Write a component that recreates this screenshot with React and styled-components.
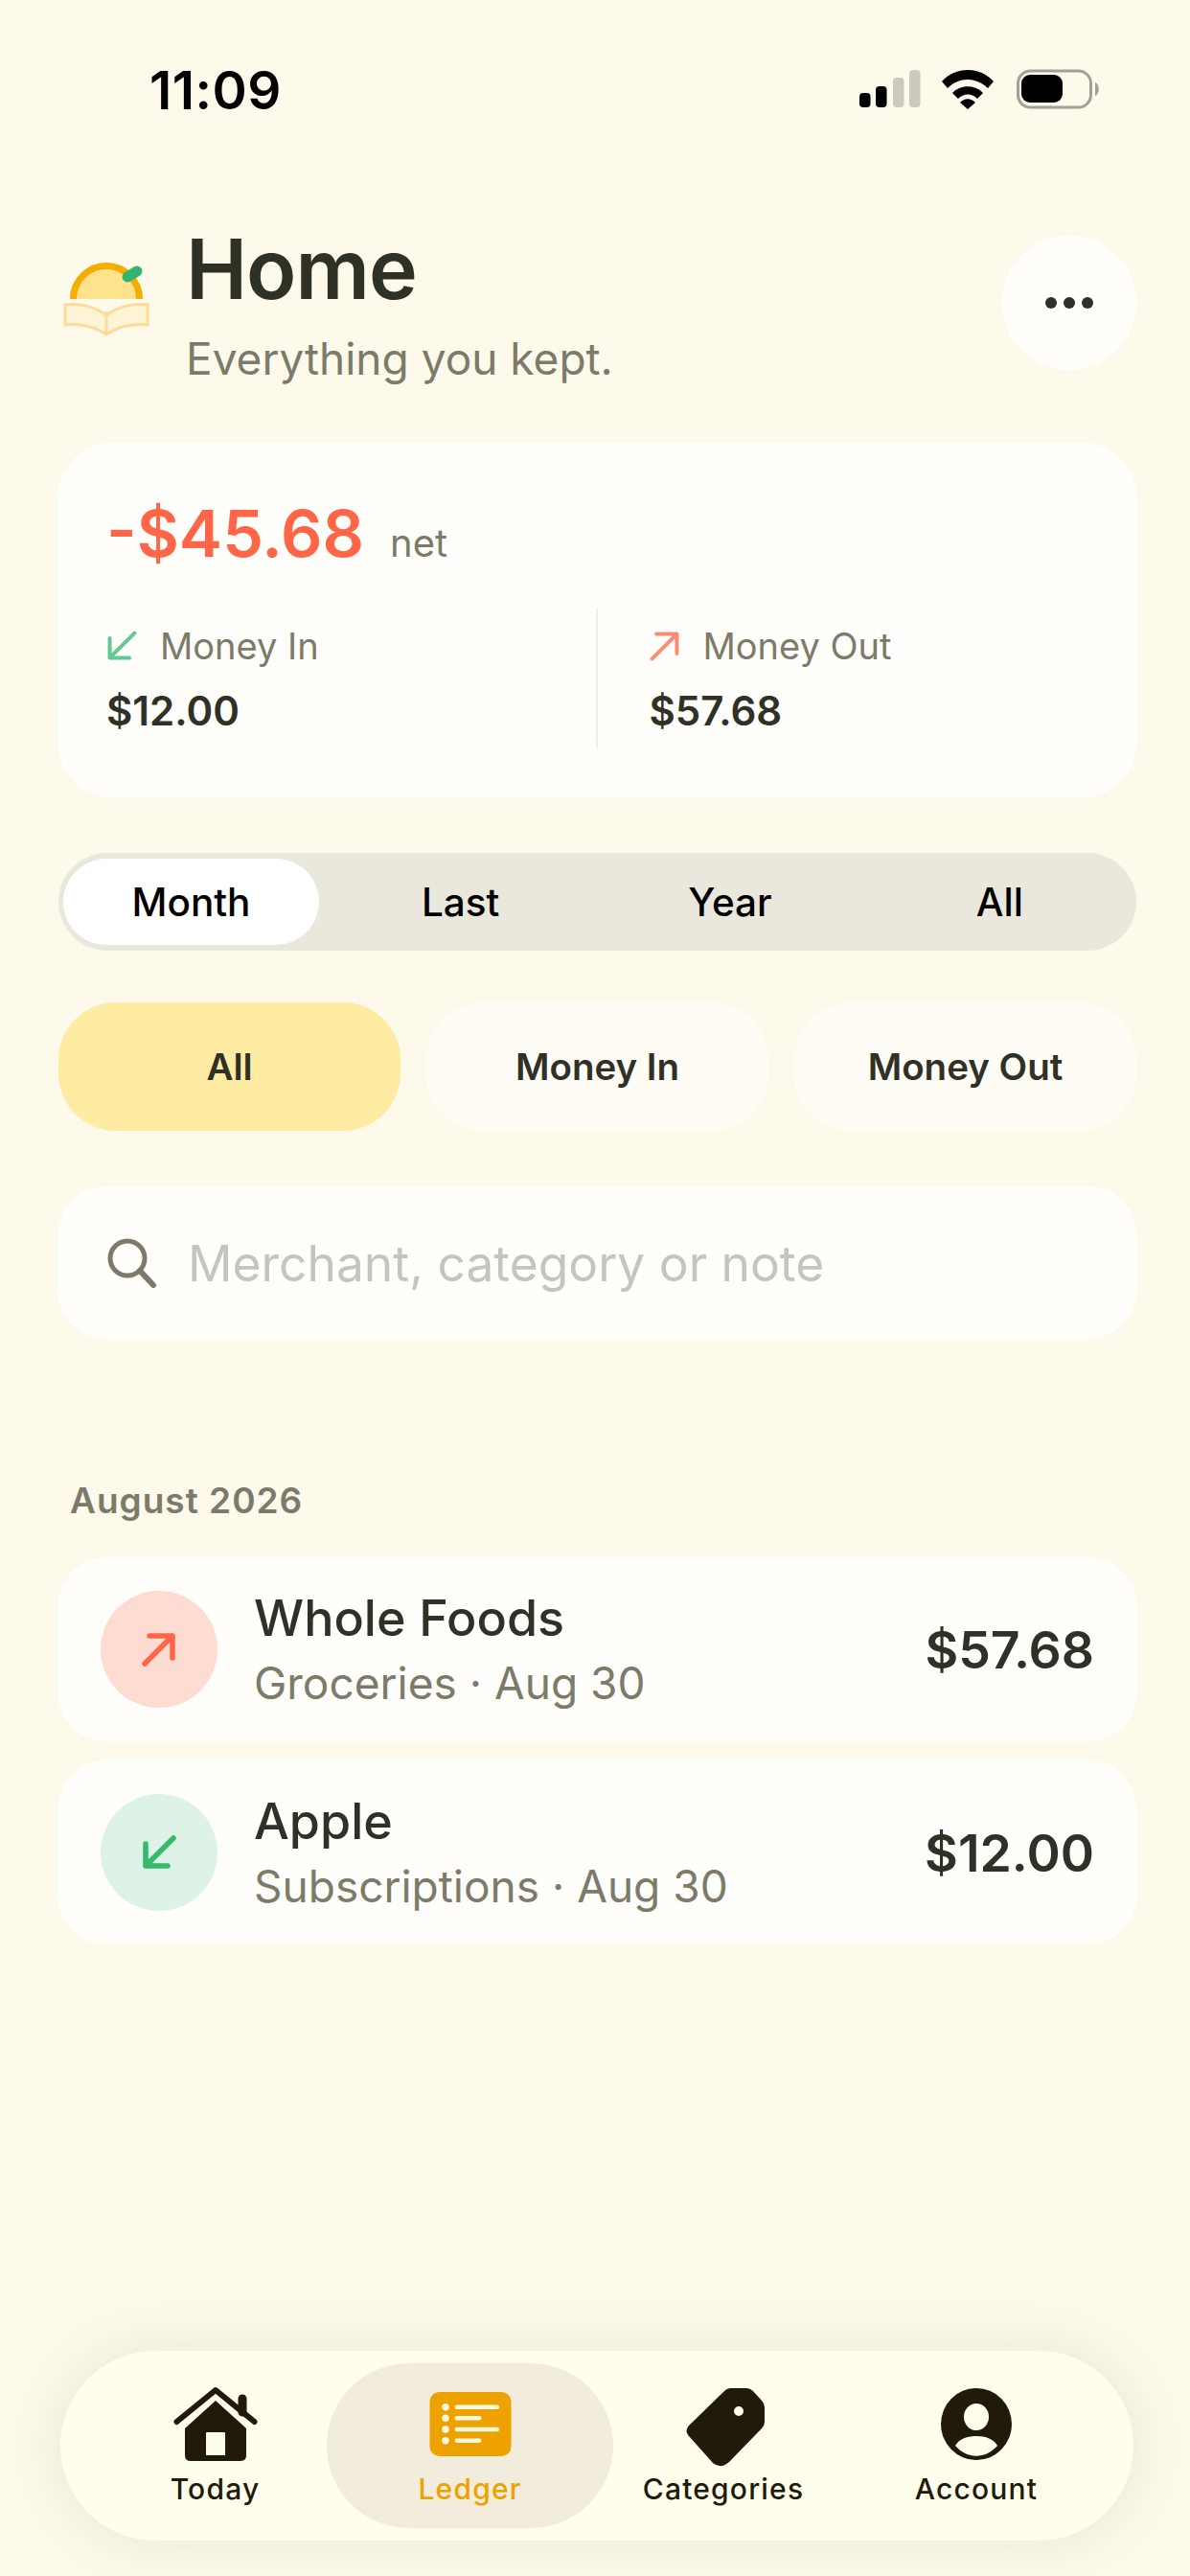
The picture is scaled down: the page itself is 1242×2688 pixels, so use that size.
import React from "react";
import styled, { createGlobalStyle } from "styled-components";

const GlobalStyle = createGlobalStyle`
  html, body {
    margin: 0;
    padding: 0;
    background: #fdf9eb;
  }
  * {
    box-sizing: border-box;
  }
`;

const Screen = styled.div`
  width: 1242px;
  height: 2688px;
  position: relative;
  overflow: hidden;
  background: #fdf9eb;
  font-family: Inter, "Liberation Sans", sans-serif;
  color: #2f3127;
`;

const StatusBar = styled.div`
  height: 186px;
  padding: 64px 93px 0 156px;
  display: flex;
  justify-content: space-between;
  align-items: flex-start;
`;

const Clock = styled.div`
  font-size: 55px;
  line-height: 60px;
  font-weight: 600;
  letter-spacing: 0.5px;
  color: #000;
`;

const StatusIcons = styled.svg`
  width: 252px;
  height: 46px;
  margin-top: 8px;
`;

const Content = styled.div`
  padding: 0 56px 0 61px;
`;

const Header = styled.div`
  display: flex;
  align-items: flex-start;
  height: 276px;
`;

const Logo = styled.svg`
  width: 92px;
  height: 84px;
  margin: 85px 37px 0 4px;
  flex: none;
`;

const TitleBlock = styled.div`
  flex: 1;
`;

const Title = styled.h1`
  margin: 45px 0 0;
  font-size: 86px;
  line-height: 100px;
  font-weight: 600;
  letter-spacing: -1px;
  color: #2f3127;
`;

const Subtitle = styled.div`
  margin-top: 17px;
  font-size: 46px;
  line-height: 52px;
  color: #7c7b69;
`;

const RoundButton = styled.div`
  width: 140px;
  height: 140px;
  margin-top: 60px;
  border-radius: 50%;
  background: #fffefa;
  display: flex;
  align-items: center;
  justify-content: center;
  gap: 7px;
`;

const Dot = styled.span`
  width: 12px;
  height: 12px;
  border-radius: 50%;
  background: #2f3127;
`;

const SummaryCard = styled.div`
  height: 370px;
  border-radius: 56px;
  background: #fffefa;
  padding: 48px 50px 0;
`;

const NetRow = styled.div`
  display: flex;
  align-items: baseline;
  gap: 27px;
  height: 92px;
`;

const NetAmount = styled.div`
  font-size: 68px;
  line-height: 92px;
  font-weight: 600;
  color: #ff6647;
`;

const NetLabel = styled.div`
  font-size: 40px;
  color: #7c7b69;
`;

const Stats = styled.div`
  display: grid;
  grid-template-columns: 1fr 1fr;
  margin-top: 32px;
`;

const Stat = styled.div`
  height: 148px;
  padding-top: 15px;
  ${(p) => p.$divided && "border-left: 2px solid #f1f0e6; margin-left: -2px; padding-left: 54px;"}
`;

const StatLabel = styled.div`
  display: flex;
  align-items: center;
  gap: 24px;
  font-size: 38px;
  line-height: 50px;
  color: #7c7b69;
`;

const ArrowIcon = styled.svg`
  width: ${(p) => p.$size}px;
  height: ${(p) => p.$size}px;
  flex: none;
`;

const StatValue = styled.div`
  margin-top: 18px;
  font-size: 42px;
  line-height: 50px;
  font-weight: 600;
  color: #2f3127;
`;

const Segments = styled.div`
  margin-top: 58px;
  height: 102px;
  padding: 6px 2px 6px 5px;
  border-radius: 51px;
  background: #eae8dc;
  display: grid;
  grid-template-columns: 274px repeat(3, 1fr);
`;

const Segment = styled.div`
  border-radius: 45px;
  display: flex;
  align-items: center;
  justify-content: center;
  font-size: 40.5px;
  font-weight: 500;
  color: #000;
  ${(p) => p.$active && "background: #fff; margin-right: 7px;"}
`;

const Filters = styled.div`
  margin-top: 54px;
  display: grid;
  grid-template-columns: repeat(3, 1fr);
  gap: 27px;
`;

const Filter = styled.div`
  height: 134px;
  border-radius: 60px;
  display: flex;
  align-items: center;
  justify-content: center;
  font-size: 38.5px;
  font-weight: 600;
  color: #2f3127;
  background: ${(p) => (p.$active ? "#ffeca3" : "#fffcf5")};
`;

const Search = styled.div`
  margin-top: 58px;
  height: 159px;
  border-radius: 50px;
  background: #fffefa;
  display: flex;
  align-items: center;
  padding: 0 50px;
  gap: 31px;
  font-size: 51.5px;
  color: #c4c4c1;
`;

const SearchIcon = styled.svg`
  width: 54px;
  height: 54px;
  flex: none;
`;

const Month = styled.div`
  margin: 144px 0 0 12px;
  height: 50px;
  font-size: 37px;
  line-height: 50px;
  font-weight: 600;
  letter-spacing: 1px;
  color: #7c7b69;
`;

const List = styled.div`
  margin-top: 34px;
  display: flex;
  flex-direction: column;
  gap: 20px;
`;

const Row = styled.div`
  height: 192px;
  border-radius: 50px;
  background: #fffefa;
  display: flex;
  align-items: center;
  padding: 0 44px;
`;

const RowIcon = styled.div`
  width: 122px;
  height: 122px;
  border-radius: 50%;
  flex: none;
  display: flex;
  align-items: center;
  justify-content: center;
  background: ${(p) => p.$bg};
`;

const RowText = styled.div`
  flex: 1;
  margin-left: 38px;
`;

const RowTitle = styled.div`
  font-size: 52px;
  line-height: 62px;
  font-weight: 500;
  color: #2f3127;
`;

const RowMeta = styled.div`
  margin-top: 8px;
  font-size: 46px;
  line-height: 56px;
  color: #7c7b69;
`;

const RowAmount = styled.div`
  font-size: 53.5px;
  font-weight: 600;
  color: #2f3127;
`;

const TabBar = styled.div`
  position: absolute;
  left: 63px;
  top: 2453px;
  width: 1120px;
  height: 198px;
  border-radius: 99px;
  background: #fffeed;
  box-shadow: 0 0 60px rgba(70, 60, 30, 0.1);
  display: flex;
  align-items: center;
  padding: 0 0 0 45px;
`;

const Tab = styled.div`
  width: ${(p) => p.$w}px;
  height: 172px;
  border-radius: 86px;
  display: flex;
  flex-direction: column;
  align-items: center;
  color: ${(p) => (p.$active ? "#eda200" : "#221a08")};
  background: ${(p) => (p.$active ? "#f1ecdb" : "transparent")};
`;

const TabIcon = styled.svg`
  width: 96px;
  height: 96px;
  margin-top: 18px;
  flex: none;
`;

const TabLabel = styled.div`
  margin-top: -3px;
  font-size: 30px;
  line-height: 40px;
  font-weight: 500;
  letter-spacing: 1.2px;
`;

const Arrow = ({ up, color, size = 32, width = 4.5 }) => (
  <ArrowIcon viewBox="0 0 36 36" $size={size}>
    <path
      d={up ? "M3 33 L32 4 M8 4 H32 V27" : "M33 3 L4 32 M4 9 V32 H27"}
      fill="none"
      stroke={color}
      strokeWidth={width}
      strokeLinecap="round"
      strokeLinejoin="round"
    />
  </ArrowIcon>
);

const rows = [
  { name: "Whole Foods", meta: "Groceries · Aug 30", amount: "$57.68", bg: "#ffdcd2", color: "#ff6647", up: true },
  { name: "Apple", meta: "Subscriptions · Aug 30", amount: "$12.00", bg: "#dcf3e5", color: "#36b86e", up: false },
];

export default function App() {
  return (
    <Screen>
      <GlobalStyle />
      <StatusBar>
        <Clock>11:09</Clock>
        <StatusIcons viewBox="0 0 252 46">
          <rect x="0" y="25" width="11.5" height="15" rx="4" fill="#000" />
          <rect x="17" y="18" width="11.5" height="22" rx="4" fill="#000" />
          <rect x="35" y="9" width="11.5" height="31" rx="4" fill="#ccc9bf" />
          <rect x="52" y="1" width="11.5" height="39" rx="4" fill="#ccc9bf" />
          <path d="M86 13 C100 -3 126 -3 140 13 L134 20 C122 8 104 8 92 20 Z M97 25 C105 16 121 16 129 25 L123 31 C117 25 109 25 103 31 Z M105 35 C110 30 116 30 121 35 L113 42 Z" fill="#000" />
          <rect x="165.5" y="2" width="76" height="38" rx="13" fill="none" stroke="#a3a195" strokeWidth="3" />
          <rect x="169" y="6" width="43" height="29" rx="9" fill="#000" />
          <path d="M246 14 C251 16 251 26 246 28 Z" fill="#a3a195" />
        </StatusIcons>
      </StatusBar>
      <Content>
        <Header>
          <Logo viewBox="0 0 92 84">
            <path d="M8 41 A38 38 0 0 1 84 41 Z" fill="#ffe28c" />
            <path d="M11.5 41 A34.5 34.5 0 0 1 80.5 41" fill="none" stroke="#f5ae00" strokeWidth="7" />
            <path d="M68 18 L78 12" stroke="#34b56f" strokeWidth="11" strokeLinecap="round" />
            <path d="M3 47 C18 45 34 49 46 58 C58 49 74 45 89 47 V68 C74 66 58 70 46 78 C34 70 18 66 3 68 Z" fill="#fff4d6" stroke="#fcdc98" strokeWidth="3" />
            <path d="M46 54 V78" stroke="#fcdc98" strokeWidth="3" />
          </Logo>
          <TitleBlock>
            <Title>Home</Title>
            <Subtitle>Everything you kept.</Subtitle>
          </TitleBlock>
          <RoundButton>
            <Dot />
            <Dot />
            <Dot />
          </RoundButton>
        </Header>

        <SummaryCard>
          <NetRow>
            <NetAmount>-$45.68</NetAmount>
            <NetLabel>net</NetLabel>
          </NetRow>
          <Stats>
            <Stat>
              <StatLabel>
                <Arrow color="#62c892" />
                Money In
              </StatLabel>
              <StatValue>$12.00</StatValue>
            </Stat>
            <Stat $divided>
              <StatLabel>
                <Arrow up color="#ff8a72" />
                Money Out
              </StatLabel>
              <StatValue>$57.68</StatValue>
            </Stat>
          </Stats>
        </SummaryCard>

        <Segments>
          <Segment $active>Month</Segment>
          <Segment>Last</Segment>
          <Segment>Year</Segment>
          <Segment>All</Segment>
        </Segments>

        <Filters>
          <Filter $active>All</Filter>
          <Filter>Money In</Filter>
          <Filter>Money Out</Filter>
        </Filters>

        <Search>
          <SearchIcon viewBox="0 0 54 54">
            <circle cx="22" cy="22" r="18" fill="none" stroke="#7c7b69" strokeWidth="5" />
            <path d="M35 35 L49 50" stroke="#7c7b69" strokeWidth="6" strokeLinecap="round" />
          </SearchIcon>
          Merchant, category or note
        </Search>

        <Month>August 2026</Month>
        <List>
          {rows.map((row) => (
            <Row key={row.name}>
              <RowIcon $bg={row.bg}>
                <Arrow up={row.up} color={row.color} size={36} width={5.5} />
              </RowIcon>
              <RowText>
                <RowTitle>{row.name}</RowTitle>
                <RowMeta>{row.meta}</RowMeta>
              </RowText>
              <RowAmount>{row.amount}</RowAmount>
            </Row>
          ))}
        </List>
      </Content>

      <TabBar>
        <Tab $w={233}>
          <TabIcon viewBox="0 0 96 96">
            <path d="M48 21 L80 50 V78 Q80 84 74 84 H22 Q16 84 16 78 V50 Z M39 54 H57 Q58 54 58 55 V78 H38 V55 Q38 54 39 54 Z" fill="#221a08" fillRule="evenodd" />
            <path d="M7.5 43 L48 10 L88.5 43" fill="none" stroke="#221a08" strokeWidth="6" strokeLinecap="round" strokeLinejoin="round" />
            <path d="M76 33 V19" stroke="#221a08" strokeWidth="9" strokeLinecap="round" />
          </TabIcon>
          <TabLabel>Today</TabLabel>
        </Tab>
        <Tab $w={299} $active>
          <TabIcon viewBox="0 0 96 96">
            <rect x="5.5" y="12" width="85" height="67" rx="10" fill="#eda200" />
            <g fill="#fff8e0">
              <circle cx="22" cy="27.7" r="3.7" />
              <circle cx="22" cy="39.3" r="3.7" />
              <circle cx="22" cy="51" r="3.7" />
              <circle cx="22" cy="62.7" r="3.7" />
              <rect x="31.5" y="25.5" width="46.5" height="4.5" rx="2.2" />
              <rect x="31.5" y="37" width="28" height="4.5" rx="2.2" />
              <rect x="31.5" y="48.7" width="46.5" height="4.5" rx="2.2" />
              <rect x="31.5" y="60.5" width="28" height="4.5" rx="2.2" />
            </g>
          </TabIcon>
          <TabLabel>Ledger</TabLabel>
        </Tab>
        <Tab $w={230}>
          <TabIcon viewBox="0 0 96 96">
            <path d="M55 8 H72 Q76 8 79 11 L88 21 Q91 24 91 28 V43 Q91 47 88 50 L54 85 Q45 93 37 86 L12 58 Q7 53 12 47 L49 11 Q52 8 55 8 Z M64 27 A5 5 0 1 0 64 37 A5 5 0 1 0 64 27 Z" fill="#221a08" fillRule="evenodd" />
          </TabIcon>
          <TabLabel>Categories</TabLabel>
        </Tab>
        <Tab $w={298}>
          <TabIcon viewBox="0 0 96 96">
            <path fillRule="evenodd" fill="#221a08" d="M48 8 A37 37.5 0 1 1 48 83 A37 37.5 0 1 1 48 8 Z M48 24 A13 14 0 1 0 48 52 A13 14 0 1 0 48 24 Z M48 58 C38 58 30 61 26 68 C32 75 40 78.7 48 78.7 C56 78.7 64 75 70 68 C66 61 58 58 48 58 Z" />
          </TabIcon>
          <TabLabel>Account</TabLabel>
        </Tab>
      </TabBar>
    </Screen>
  );
}
